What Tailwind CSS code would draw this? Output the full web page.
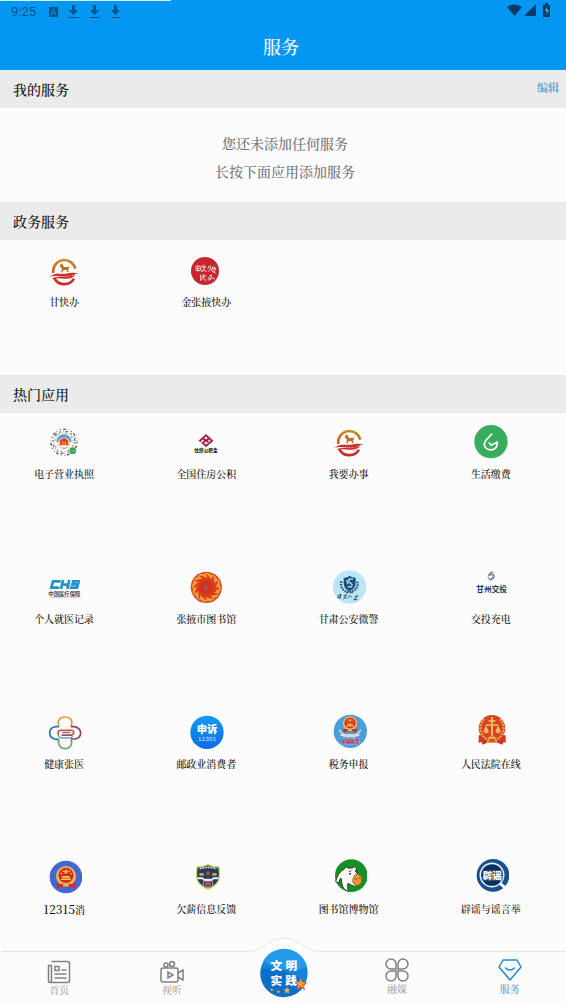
<!DOCTYPE html>
<html lang="zh-CN">
<head>
<meta charset="utf-8">
<meta name="viewport" content="width=device-width, initial-scale=1">
<title>服务</title>
<script src="https://cdn.jsdelivr.net/npm/@tailwindcss/browser@4"></script>
</head>
<body class="bg-[#fcfcfc] text-[#111] font-['Noto_Serif_CJK_SC','Noto_Serif_SC','Noto_Sans_CJK_SC',serif]">
<svg width="0" height="0" class="absolute" aria-hidden="true">
  <defs>
    <linearGradient id="gold" x1="0" y1="0" x2="0" y2="1"><stop offset="0" stop-color="#c98a25"/><stop offset=".5" stop-color="#c0602a"/><stop offset="1" stop-color="#c8282b"/></linearGradient>
    <linearGradient id="blue" x1="0" y1="0" x2="0" y2="1"><stop offset="0" stop-color="#159af5"/><stop offset="1" stop-color="#0b6be4"/></linearGradient>
    <symbol id="horse" viewBox="0 0 108 108">
      <path d="M22 60A34 34 0 0 1 54 21a34 34 0 0 1 34 26M24 74a34 34 0 0 0 60 3" fill="none" stroke="url(#gold)" stroke-width="8"/>
      <path d="M10 71C30 57 42 64 57 62s28-5 40-1C82 65 76 71 59 71S28 66 10 71Z" fill="#c8332c"/>
      <path d="M16 78c19-10 30-5 43-6s18-5 30-5c-11 9-20 11-33 10s-27-3-40 1Z" fill="#c8332c"/>
      <path d="m42 36 6-5 3 6 3 5h13l3-4-1 8-3 3 2 9h-4l-3-7h-8l-4 7h-4l3-9-3-6-4-3Z" fill="#bd7028"/>
    </symbol>
    <symbol id="emblem" viewBox="0 0 60 60">
      <circle cx="30" cy="26" r="25" fill="#e9b94d"/>
      <circle cx="30" cy="24" r="19" fill="#d52a20"/>
      <path d="m30 8 2 5h5l-4 3 2 5-5-3-5 3 2-5-4-3h5ZM18 32h24v4H18ZM22 26h16l3 4H19Z" fill="#f7cf55"/>
      <g fill="#f7cf55"><circle cx="18" cy="20" r="2"/><circle cx="42" cy="20" r="2"/><circle cx="22" cy="14" r="2"/><circle cx="38" cy="14" r="2"/></g>
      <path d="M7 42q11 7 23 1 12 6 23-1v13q-11 3-15-4-8 5-16 0-5 7-15 4Z" fill="#c92f29"/>
      <path d="M23 44h14v8H23Z" fill="#edbb53"/>
    </symbol>
    <symbol id="star" viewBox="0 0 24 24"><path d="m12 1 3 7 8 1-6 5 2 8-7-4-7 4 2-8-6-5 8-1Z"/></symbol>
  </defs>
</svg>

<div class="relative flex min-h-screen flex-col">
  <div class="absolute left-0 top-0 h-px w-[171px] bg-[#d4f2fb]"></div>
  <header class="flex h-[70px] flex-col bg-[#0497f2]">
    <div class="flex h-6 items-center justify-between pl-[11px] pr-[15px] text-[#07548a]">
      <div class="flex items-center gap-[10px]">
        <span class="mr-[3px] font-[Roboto] text-[13px] leading-6">9:25</span>
        <svg class="h-[10px] w-[9px]" viewBox="0 0 9 10"><rect width="9" height="10" rx="1" fill="currentColor"/><path d="M2 8 4.500 2 7 8M3 6h3" fill="none" stroke="#0a8be0"/></svg>
        <svg class="h-[14px] w-[11px]" viewBox="0 0 11 14"><path d="M4 0h3v5h3L5.500 10 1 5h3ZM1 12h10v1H1Z" fill="currentColor"/></svg>
        <svg class="h-[14px] w-[11px]" viewBox="0 0 11 14"><path d="M4 0h3v5h3L5.500 10 1 5h3ZM1 12h10v1H1Z" fill="currentColor"/></svg>
        <svg class="h-[14px] w-[11px]" viewBox="0 0 11 14"><path d="M4 0h3v5h3L5.500 10 1 5h3ZM1 12h10v1H1Z" fill="currentColor"/></svg>
      </div>
      <svg class="mb-1 h-[14px] w-[44px]" viewBox="0 0 44 14" fill="#053d67"><path d="M0 4Q7-1 15 4L7.500 13ZM17 13 29 1v12ZM36 2h2V0h3v2h2v12h-7Z"/><path d="m40 4-2 4h2l-1 4 3-5h-2Z" fill="#55b8ef"/></svg>
    </div>
    <h1 class="pr-1 pt-2 text-center text-[18px] font-medium leading-7 text-white">服务</h1>
  </header>

  <main>
    <section>
      <div class="flex h-[38px] items-center justify-between bg-[#ebebeb] pl-[13px] pr-[7px]">
        <h2 class="text-[14px] font-medium leading-5">我的服务</h2>
        <button type="button" class="pb-1 text-[11px] font-medium leading-4 text-[#2c96d2]">编辑</button>
      </div>
      <div class="pb-[17px] pl-1 pt-[21px] text-center text-[14px] font-medium leading-7 text-[#757575]">
        <p>您还未添加任何服务</p>
        <p>长按下面应用添加服务</p>
      </div>
    </section>

    <section>
      <h2 class="flex h-[38px] items-center bg-[#ebebeb] pl-[13px] text-[14px] font-medium leading-5">政务服务</h2>
      <div class="grid grid-cols-4 gap-x-[14px] pb-[65px] pr-[11px] pt-[13px] text-center text-[10px] font-medium leading-4">
        <a href="#" class="flex flex-col items-center gap-[5px]"><svg class="size-9"><use href="#horse"/></svg><span>甘快办</span></a>
        <a href="#" class="flex flex-col items-center gap-[5px]">
          <svg class="size-9" viewBox="0 0 108 108"><circle cx="51" cy="54" r="42" fill="#c8262f"/>
            <g fill="none" stroke="#f7d9d6" stroke-width="3" stroke-linecap="round"><path d="m22 42 7-5 6 4m-11 5h10m-5-5v13m-6-3 13 2M40 38l-3 10 5 7m1-13h11m-6-6v12l-6 8m5-5 8 4M60 46l5-8 3 9-6 8m9-3 4-12 6 6m-8 3 10-4-5 13m-6-4 10 6M38 66v15m5-11 11-1m-7-5-2 11-6 7m8-7 7 8M62 74l7-9 2 6-7 11m6-9 9 5m-19 0h9"/></g></svg>
          <span>金张掖快办</span></a>
      </div>
    </section>

    <section>
      <h2 class="flex h-[38px] items-center bg-[#ebebeb] pl-[13px] text-[14px] font-medium leading-5">热门应用</h2>
      <div class="grid grid-cols-4 gap-x-[14px] gap-y-[87px] pb-[18px] pr-[11px] pt-[11px] text-center text-[10px] font-medium leading-4">

        <a href="#" class="flex flex-col items-center gap-[6px]">
          <svg class="size-9" viewBox="0 0 108 108"><g fill="none" stroke="#555" stroke-width="4"><circle cx="54" cy="55" r="39" stroke-dasharray="3 7 8 5 2 9"/><circle cx="54" cy="55" r="33" stroke="#777" stroke-dasharray="5 6 2 5 9 8"/><circle cx="54" cy="55" r="28" stroke="#999" stroke-dasharray="2 6 5 8"/></g>
            <circle cx="54" cy="54" r="24" fill="#fff"/><path d="M31 54a23 23 0 0 1 46 0Z" fill="#5b9fd8"/><path d="M36 58a18 18 0 0 1 36 0v8H36Z" fill="#f3c9a3"/><path d="m42 49 12-8 12 8v14H42Z" fill="#d9472e"/><path d="M48 53h4v10h-4Zm8 0h4v10h-4Z" fill="#f0a43c"/><path d="M33 67q20 9 42 0-20 14-42 0Z" fill="#de6b4c"/><circle cx="80" cy="80" r="10" fill="#31a457"/><path d="m75 80 4 4 7-8" fill="none" stroke="#a8e3b6" stroke-width="2"/></svg>
          <span>电子营业执照</span></a>

        <a href="#" class="flex flex-col items-center gap-[6px]">
          <svg class="size-9" viewBox="0 0 108 108"><g fill="none" stroke="#a5294b" stroke-width="6"><path d="m39 53-3-3 18-16 18 16-18 16-10-9 10-9 7 6"/><path d="m45 43 9 8 9-8"/></g><text x="54" y="85" font-size="14" font-weight="900" text-anchor="middle" fill="#222" font-family="Noto Sans CJK SC">住房公积金</text></svg>
          <span>全国住房公积</span></a>

        <a href="#" class="flex flex-col items-center gap-[6px]"><svg class="size-9"><use href="#horse"/></svg><span>我要办事</span></a>

        <a href="#" class="flex flex-col items-center gap-[6px]">
          <svg class="size-9" viewBox="0 0 108 108"><circle cx="54" cy="53" r="50" fill="#37ad5d"/><path d="M56 30 38 50q-9 14 2 23 12 9 25 1 9-7 8-20L55 64l-6-7" fill="none" stroke="#fff" stroke-width="5" stroke-linecap="round" stroke-linejoin="round"/></svg>
          <span>生活缴费</span></a>

        <a href="#" class="flex flex-col items-center gap-[6px]">
          <svg class="size-9" viewBox="0 0 108 108"><g fill="none" stroke="#2491cd" stroke-width="8"><path d="M44 37H21l-5 19h24"/><path d="m51 33-6 27m25-27-6 27M48 47h19"/><path d="M102 37H82l-3 9h17l-3 10H71"/></g><text x="55" y="81" font-size="16" font-weight="700" text-anchor="middle" fill="#3f474d" font-family="Noto Sans CJK SC">中国医疗保障</text><path d="M17 86h77" stroke="#aaa" stroke-width="2" stroke-dasharray="4 2"/></svg>
          <span>个人就医记录</span></a>

        <a href="#" class="flex flex-col items-center gap-[6px]">
          <svg class="size-9" viewBox="0 0 108 108"><circle cx="55" cy="55" r="47" fill="#d8532c"/><circle cx="55" cy="55" r="36" fill="none" stroke="#f0a030" stroke-width="10"/>
            <g fill="#d93a20"><path id="ray" d="M55 55Q66 34 51 10q25 18 14 44Z"/><use href="#ray" transform="rotate(30 55 55)"/><use href="#ray" transform="rotate(60 55 55)"/><use href="#ray" transform="rotate(90 55 55)"/><use href="#ray" transform="rotate(120 55 55)"/><use href="#ray" transform="rotate(150 55 55)"/><use href="#ray" transform="rotate(180 55 55)"/><use href="#ray" transform="rotate(210 55 55)"/><use href="#ray" transform="rotate(240 55 55)"/><use href="#ray" transform="rotate(270 55 55)"/><use href="#ray" transform="rotate(300 55 55)"/><use href="#ray" transform="rotate(330 55 55)"/></g><circle cx="55" cy="55" r="22" fill="#d8321f"/><circle cx="55" cy="55" r="7" fill="#8c5968"/><circle cx="55" cy="55" r="41" fill="none" stroke="#f5c04a" stroke-width="3" stroke-dasharray="11 10"/></svg>
          <span>张掖市图书馆</span></a>

        <a href="#" class="flex flex-col items-center gap-[6px]">
          <svg class="size-9" viewBox="0 0 108 108"><circle cx="56" cy="54" r="50" fill="#bce5f5"/><path d="M38 26q11 1 18-6 8 7 18 6v16q0 17-18 25-18-8-18-25Z" fill="#17527f"/><path d="M66 31q-12-4-13 4c0 8 13 7 10 15q-3 7-13 2M47 33l4 12" fill="none" stroke="#b7dcea" stroke-width="4"/><path d="M31 37q-6 26 24 34 30-9 24-34" fill="none" stroke="#345f70" stroke-width="7" stroke-dasharray="5 3"/><path d="m45 71 20-12M47 60l19 12" stroke="#345f70" stroke-width="3"/><g fill="none" stroke="#2f5162" stroke-width="3"><path d="m20 80 10-4-4 14m-8-4 12-3m8-3 9-3-3 5-7 9m3-8 6 6m10-9-5 7m7-7 4 5m9-2 9-3-4 6-8 6h11"/></g></svg>
          <span>甘肃公安微警</span></a>

        <a href="#" class="flex flex-col items-center gap-[6px]">
          <svg class="size-9" viewBox="0 0 108 108"><g fill="none" stroke-width="3" stroke-linecap="round"><path d="M57 9q-9 3-10 10l9-2q8-1 8 5-2 10-13 11" stroke="#2c4169"/><path d="M45 23q-1 8 7 7 7-2 9-10" stroke="#8790a4"/><path d="m54 15 8-4" stroke="#d69662"/></g><text x="56" y="69" font-size="23" font-weight="700" text-anchor="middle" fill="#203969" font-family="Noto Sans CJK SC">甘州交投</text></svg>
          <span>交投充电</span></a>

        <a href="#" class="flex flex-col items-center gap-[6px]">
          <svg class="size-9" viewBox="0 0 108 108"><g fill="none" stroke-width="5"><path d="M39 38C32 20 42 8 58 9c16 0 24 12 17 29" stroke="#e59a36"/><path d="M39 38H30q-18 2-19 18 1 19 20 20h8" stroke="#257caf"/><path d="M39 76c-5 16 5 28 19 28s23-13 17-28" stroke="#69ad6a"/><path d="M75 38h12q17 5 17 19-1 16-17 18H75" stroke="#8d3b6d"/><path d="M38 64q-6-16 7-15h31q8 0 7 8-1 6-10 6H48" stroke="#c4593b"/><path d="M46 64h26q7 0 7 4t-8 4H47q-8 0-10-8" stroke="#36679e" stroke-width="3"/><path d="M49 56h23" stroke="#a7365d" stroke-width="3"/></g></svg>
          <span>健康张医</span></a>

        <a href="#" class="flex flex-col items-center gap-[6px]">
          <svg class="size-9" viewBox="0 0 108 108"><circle cx="57" cy="55" r="50" fill="url(#blue)"/><text x="57" y="58" font-size="31" font-weight="900" text-anchor="middle" fill="#fff" font-family="Liberation Sans,Noto Sans CJK SC">申诉</text><text x="57" y="82" font-size="17" font-weight="400" text-anchor="middle" fill="#d9edff" font-family="DejaVu Sans">12305</text></svg>
          <span>邮政业消费者</span></a>

        <a href="#" class="flex flex-col items-center gap-[6px]">
          <svg class="size-9" viewBox="0 0 108 108"><circle cx="58" cy="52" r="50" fill="#4a9edf"/><use href="#emblem" x="31" y="2" width="52" height="60"/><path d="M27 46q5 15 22 16l-4 7-18-4 5-5q-6-5-9-13Zm60 0q-5 15-22 16l4 7 18-4-5-5q6-5 9-13Z" fill="#e7ddd0"/><path d="M41 60h33v10H41Z" fill="#dfd8cb"/><text x="58" y="88" font-size="14" font-weight="900" text-anchor="middle" fill="#b43259" stroke="#b9bfe6" stroke-width="2" paint-order="stroke" font-family="Noto Sans CJK SC">中国税务</text></svg>
          <span>税务申报</span></a>

        <a href="#" class="flex flex-col items-center gap-[6px]">
          <svg class="size-9" viewBox="0 0 108 108"><path d="M20 64H17v23l8-3 4 8 12-5h34l13 5 4-8 6 3V64Z" fill="#c93a25"/><circle cx="57" cy="43" r="40" fill="#d94225"/><path d="M33 15Q16 35 27 62q10 14 25 17M81 15q18 21 6 47-9 14-25 17" fill="none" stroke="#e7a847" stroke-width="7" stroke-dasharray="6 3"/><path d="M54 9h6v58h-6ZM47 18h20v5H47ZM38 31h38v4H38ZM47 68h20v6H47ZM39 34l9 19H31Zm36 0 9 19H67Z" fill="#f0bd58"/><path d="M31 53h17q-8 9-17 0Zm36 0h17q-8 9-17 0ZM41 80q16 7 32 0v6H41Z" fill="#f0bd58"/></svg>
          <span>人民法院在线</span></a>

        <a href="#" class="flex flex-col items-center gap-[6px]">
          <svg class="size-9" viewBox="0 0 108 108"><circle cx="60" cy="54" r="49" fill="#4267d4"/><use href="#emblem" x="24" y="20" width="72" height="72"/></svg>
          <span class="whitespace-nowrap"><span class="text-[12px]">12315</span>消</span></a>

        <a href="#" class="flex flex-col items-center gap-[6px]">
          <svg class="size-9" viewBox="0 0 108 108"><path d="M27 24q16 0 33-7 16 7 33 7 4 22-1 41-10 18-32 25-22-7-32-25-5-20-1-41Z" fill="#243c54" stroke="#dbd66a" stroke-width="4"/><path d="M35 29q26-8 50 0" fill="none" stroke="#d2dae0" stroke-width="5" stroke-dasharray="6 2"/><path d="m60 34 3 6h6l-5 4 2 7-6-4-6 4 2-7-5-4h6Z" fill="#d13e3e"/><path d="M34 42h13v8H34Zm39 0h13v8H73Z" fill="#b7ae50"/><path d="M29 55h15l5 4h22l5-4h15v6H77l-5 5H48l-5-5H29Z" fill="#e5edf0"/><path d="M51 66h18v12l-9 5-9-5Z" fill="#a94d5d"/><path d="M46 66v12q4 6 14 8 10-2 14-8V66" fill="none" stroke="#9aafb9" stroke-width="3"/></svg>
          <span>欠薪信息反馈</span></a>

        <a href="#" class="flex flex-col items-center gap-[6px]">
          <svg class="size-9" viewBox="0 0 108 108"><circle cx="61" cy="50" r="49" fill="#149025"/><path d="M14 68q6-28 26-38l5-7 8 5 14-2 5-4 5 8-4 6 13 16q7 16-4 27-11 7-22-1l-9-5q-4 13 2 24-14-2-19-16l-4-24q-5 5-7 15Z" fill="#fafaf5" stroke="#28422d" stroke-width="3"/><path d="M72 47q17-4 21 11 0 16-9 20-14 5-19-10 0-14 7-21Z" fill="#ee9631" stroke="#744c22" stroke-width="2"/><path d="M54 38l7-3m15 2 4-2" fill="none" stroke="#26382b" stroke-width="3"/><g fill="#26382b"><circle cx="57" cy="44" r="3"/><circle cx="77" cy="40" r="2"/><circle cx="75" cy="60" r="2"/><circle cx="87" cy="58" r="2"/></g></svg>
          <span>图书馆博物馆</span></a>

        <a href="#" class="flex flex-col items-center gap-[6px]">
          <svg class="size-9" viewBox="0 0 108 108"><circle cx="60" cy="49" r="49" fill="#184f8d"/><circle cx="57" cy="48" r="35" fill="#102e5c" stroke="#e4f0f8" stroke-width="5"/><path d="m81 73 15 13" stroke="#f5f8fb" stroke-width="9"/><path d="M29 34h59v31H29Z" fill="#24568c"/><text x="58" y="60" font-size="29" font-weight="900" text-anchor="middle" fill="#fff" font-family="Noto Sans CJK SC">辟谣</text><path d="m59 36-5 13h6l-4 13" fill="none" stroke="#d78b41" stroke-width="4"/></svg>
          <span>辟谣与谣言举</span></a>
      </div>
    </section>
  </main>

  <nav class="mt-auto" aria-label="主导航">
    <div class="flex h-4 pl-[2px]" aria-hidden="true">
      <div class="flex-1 border-b border-[#e5e5e5]"></div>
      <svg class="h-4 w-[70px]" viewBox="0 0 70 16"><path d="M0 15.500C15 15 18 2 35 2S55 15 70 15.500" fill="none" stroke="#e5e5e5"/></svg>
      <div class="flex-1 border-b border-[#e5e5e5]"></div>
    </div>
    <div class="grid h-[54px] grid-cols-5 pl-[3px] text-center text-[10px] leading-3 text-[#979797]">
      <a href="#" class="flex flex-col items-center pt-2">
        <svg class="h-6 w-6" viewBox="0 0 24 24" fill="none" stroke="#808080" stroke-width="1.500"><path d="M4.500 1.500h16q2 0 2 2v17q0 2-2 2h-17q-2 0-2-2v-15h3v15q0 2-2 2M8 6.500h4v4H8ZM14.500 10h5M7.500 14h12M7.500 18h12"/></svg><span>首页</span></a>
      <a href="#" class="flex flex-col items-center pt-2">
        <svg class="h-6 w-6" viewBox="0 0 24 24" fill="none" stroke="#808080" stroke-width="1.500"><rect x="1" y="8" width="17" height="14" rx="2"/><path d="m18 13 5-3v10l-5-3M8 12v6l5-3Z"/><circle cx="6" cy="5" r="2"/><circle cx="12" cy="4" r="2.500"/></svg><span>视听</span></a>
      <a href="#" class="-mt-[3px] flex flex-col items-center" aria-label="文明实践">
        <svg class="h-12 w-12 overflow-visible" viewBox="0 0 144 144"><circle cx="72" cy="72" r="71" fill="#1284dc"/><path d="M2 60Q65 50 138 100A71 71 0 0 1 2 85Z" fill="#0b6fca"/><path d="M10 36A71 71 0 0 1 141 53Q75 80 10 36Z" fill="#239be9"/><g fill="#fff" font-size="35" font-weight="900" font-family="Liberation Sans,Noto Sans CJK SC,sans-serif" text-anchor="middle"><text x="49" y="64">文</text><text x="94" y="64">明</text><text x="49" y="108">实</text><text x="93" y="108">践</text></g><g fill="#efad3f"><use href="#star" x="30" y="116" width="11" height="11"/><use href="#star" x="49" y="122" width="12" height="12"/><use href="#star" x="70" y="113" width="22" height="22"/></g><use href="#star" x="102" y="85" width="42" height="42" fill="#df5f2c"/><use href="#star" x="105" y="87" width="33" height="33" fill="#f49a3c"/></svg></a>
      <a href="#" class="flex flex-col items-center pt-[6px]">
        <svg class="h-6 w-6" viewBox="0 0 24 24" fill="none" stroke="#808080" stroke-width="1.500"><path d="M11 11H6a5 5 0 1 1 5-5ZM13 11V6a5 5 0 1 1 5 5ZM11 13v5a5 5 0 1 1-5-5ZM13 13h5a5 5 0 1 1-5 5Z"/></svg><span class="pt-[1px]">融媒</span></a>
      <a href="#" class="flex flex-col items-center pt-[6px] text-[#2c91d5]" aria-current="page">
        <svg class="h-6 w-6" viewBox="0 0 24 24" fill="none" stroke="#218ad0" stroke-width="1.500" stroke-linejoin="round"><path d="M5 2h14l4 7-11 13L1 9Z"/><path d="M7.500 10q4.500 4 9 0" stroke-linecap="round"/></svg><span class="pt-[1px]">服务</span></a>
    </div>
  </nav>
</div>
</body>
</html>
